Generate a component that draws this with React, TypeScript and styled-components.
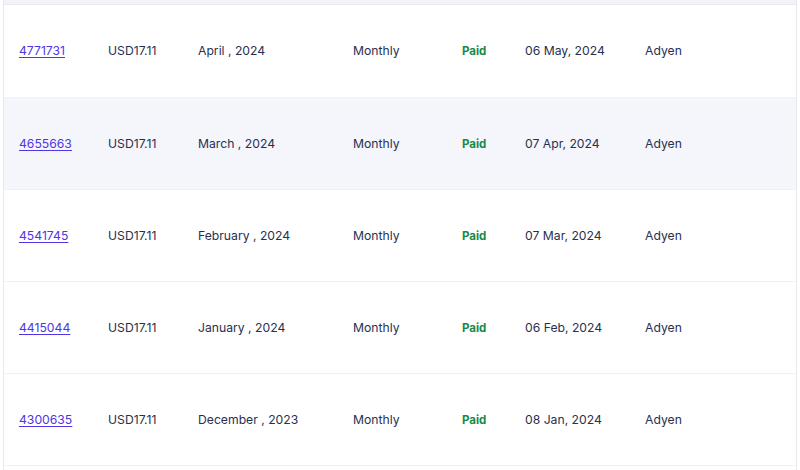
import React from "react";
import styled, { createGlobalStyle } from "styled-components";

const Global = createGlobalStyle`
  html, body { margin: 0; padding: 0; background: #ffffff; overflow: hidden; }
  body { font-family: Inter, "Open Sans", sans-serif; }
`;

const Frame = styled.div`
  width: 792px;
  height: 470px;
  margin-left: 3px;
  border-left: 1px solid #e9e9f0;
  border-right: 1px solid #e9e9f0;
  background: #ffffff;
`;

const HeadStrip = styled.div`
  height: 4px;
  background: #f4f4f8;
  border-bottom: 1px solid #e8e8ef;
`;

const Table = styled.table`
  width: 100%;
  border-collapse: collapse;
  table-layout: fixed;
`;

const Row = styled.tr<{ $alt: boolean }>`
  height: 92px;
  background: ${(p) => (p.$alt ? "#f5f5fc" : "#ffffff")};
  border-bottom: 1px solid #f1f1f5;
`;

const Cell = styled.td<{ $w?: number }>`
  box-sizing: border-box;
  width: ${(p) => (p.$w ? `${p.$w}px` : "auto")};
  padding: 0 0 0 15px;
  font-size: 12.2px;
  color: #28304f;
  white-space: nowrap;
  vertical-align: middle;
`;

const IdLink = styled.a`
  color: #4e36e2;
  text-decoration: underline;
  text-underline-offset: 2px;
  cursor: pointer;
`;

const Status = styled.span`
  color: #138a46;
  font-size: 11.5px;
  font-weight: 700;
`;

const rows = [
  { id: "4771731", period: "April , 2024", date: "06 May, 2024" },
  { id: "4655663", period: "March , 2024", date: "07 Apr, 2024" },
  { id: "4541745", period: "February , 2024", date: "07 Mar, 2024" },
  { id: "4415044", period: "January , 2024", date: "06 Feb, 2024" },
  { id: "4300635", period: "December , 2023", date: "08 Jan, 2024" },
];

const widths = [89, 90, 155, 109, 63, 120];

export default function App() {
  return (
    <>
      <Global />
      <Frame>
        <HeadStrip />
        <Table>
          <tbody>
            {rows.map((r, i) => (
              <Row key={r.id} $alt={i === 1}>
                <Cell $w={widths[0]}>
                  <IdLink>{r.id}</IdLink>
                </Cell>
                <Cell $w={widths[1]}>USD17.11</Cell>
                <Cell $w={widths[2]}>{r.period}</Cell>
                <Cell $w={widths[3]}>Monthly</Cell>
                <Cell $w={widths[4]}>
                  <Status>Paid</Status>
                </Cell>
                <Cell $w={widths[5]}>{r.date}</Cell>
                <Cell>Adyen</Cell>
              </Row>
            ))}
          </tbody>
        </Table>
      </Frame>
    </>
  );
}
